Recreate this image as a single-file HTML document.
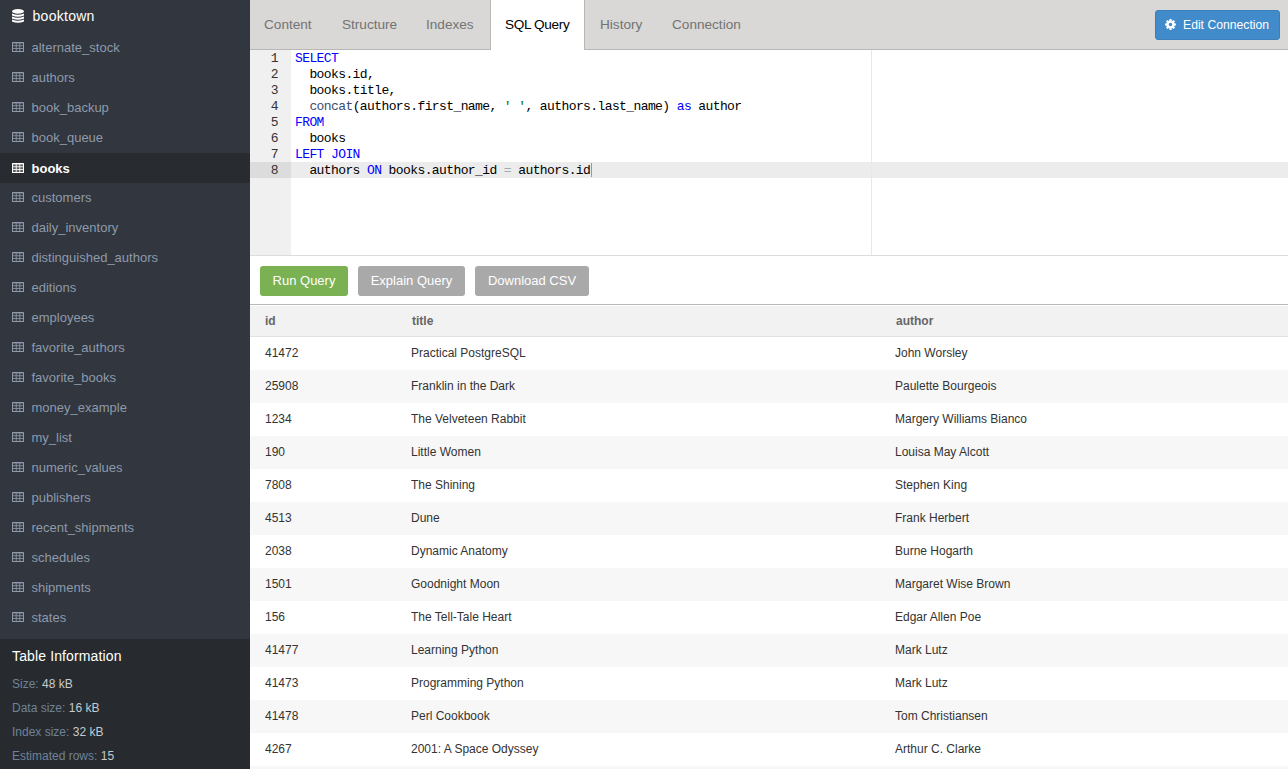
<!DOCTYPE html>
<html><head><meta charset="utf-8">
<style>
*{box-sizing:border-box;margin:0;padding:0}
html,body{width:1288px;height:769px;overflow:hidden;background:#fff;font-family:"Liberation Sans",sans-serif}
#sidebar{position:absolute;left:0;top:0;width:250px;height:769px;background:#32363e}
#dbname{position:absolute;left:0;top:0;width:250px;height:33px;color:#fff;font-size:14px}
#dbname svg{position:absolute;left:12px;top:9px}
#dbname span{position:absolute;left:32.5px;top:8px;line-height:16px;letter-spacing:0.28px}
#tables{position:absolute;left:0;top:33px;width:250px}
#tables div{position:relative;height:30px;color:#8e9aab;font-size:13px;line-height:30px;padding-left:31.5px}
#tables div svg{position:absolute;left:12px;top:9px}
#tables div.sel svg{top:10px}
#tables div.sel{background:#282c31;color:#fff;font-weight:bold;line-height:32px}
#info{position:absolute;left:0;top:639px;width:250px;height:130px;background:#272b30}
#info h4{position:absolute;left:12px;top:9px;letter-spacing:0.13px;font-weight:normal;font-size:14px;color:#fff;line-height:16px}
#info p{position:absolute;left:12px;font-size:12px;color:#6f8296;line-height:14px;white-space:nowrap}
#info p b{font-weight:normal;color:#c5cacf}
#nav{position:absolute;left:250px;top:0;width:1038px;height:50px;background:#d9d8d6;border-bottom:1px solid #b8b7b5}
.tab{position:absolute;top:0;height:49px;font-size:13.6px;color:#737373;line-height:16px;padding-top:17px;white-space:nowrap}
.tab.sel{background:#fff;color:#000;border-left:1px solid #b8b7b5;border-right:1px solid #b8b7b5;height:50px}
#editbtn{position:absolute;left:905px;top:10px;width:125px;height:30px;background:#428bca;border:1px solid #3b80bd;border-radius:3px;color:#fff;font-size:12.2px;line-height:28px}
#editbtn svg{position:absolute;left:9px;top:8px}
#editbtn span{position:absolute;left:27px;top:0}
#editor{position:absolute;left:250px;top:50px;width:1038px;height:206px;background:#fff;border-bottom:1px solid #dcdcdc;font-family:"Liberation Mono",monospace;font-size:12px}
#gutter{position:absolute;left:0;top:0;width:41px;height:205px;background:#f0f0f0}
.ln{position:absolute;left:0;width:41px;height:16px;line-height:16px;padding-top:1px;text-align:right;padding-right:13px;color:#333;font-size:13px;letter-spacing:-0.6px}
.ln.act{background:#dcdcdc}
.actline{position:absolute;left:41px;width:997px;top:112px;height:16px;background:#ececec}
.margin{position:absolute;left:621px;top:0;width:1px;height:205px;background:#e8e8e8}
.code{position:absolute;left:45px;height:16px;line-height:16px;padding-top:1px;white-space:pre;color:#000;font-size:13px;letter-spacing:-0.6px}
.kw{color:#0000ff}.fn{color:#3c4c72}.str{color:#036a07}.op{color:#a3abb3}
.caret{position:absolute;width:1px;height:14px;background:#9a9a9a}
#btns{position:absolute;left:260px;top:266px}
.btn{position:absolute;top:0;height:30px;border-radius:3px;color:#fff;font-size:13px;line-height:30px;white-space:nowrap;text-align:center}
#results{position:absolute;left:250px;top:304px;width:1038px;height:465px;border-top:1px solid #b9b9b9;overflow:hidden}
.hdr{position:absolute;left:0;top:1px;width:1038px;height:31px;background:#f2f2f2;border-bottom:1px solid #e2e2e2}
.hdr span{position:absolute;top:0;line-height:31px;font-size:12px;font-weight:bold;color:#666}
.row{position:absolute;left:0;width:1038px;height:33px;font-size:12px;color:#333}
.row.g{background:#f7f7f7}
.row span{position:absolute;top:0;line-height:33px;white-space:nowrap}
.c1{left:15px}.c2{left:161px}.c3{left:645px}
</style></head><body>
<div id="sidebar">
  <div id="dbname">
    <svg width="12" height="14" viewBox="0 0 12 14"><g fill="#fff"><ellipse cx="6" cy="2.35" rx="6" ry="2.35"/><path d="M0 4.5Q6 6.9 12 4.5V6.6Q6 9.0 0 6.6Z"/><path d="M0 7.5Q6 9.9 12 7.5V9.6Q6 12.0 0 9.6Z"/><path d="M0 10.5Q6 12.9 12 10.5V12.6Q6 15.0 0 12.6Z"/></g></svg>
    <span>booktown</span>
  </div>
  <div id="tables">
    <div><svg width="12" height="10" viewBox="0 0 12 10"><rect width="12" height="10" rx=".6" fill="currentColor"/><g fill="rgba(0,0,0,.62)"><rect x="1" y="1.4" width="2.8" height="2"/><rect x="4.6" y="1.4" width="2.8" height="2"/><rect x="8.2" y="1.4" width="2.8" height="2"/><rect x="1" y="4.2" width="2.8" height="2"/><rect x="4.6" y="4.2" width="2.8" height="2"/><rect x="8.2" y="4.2" width="2.8" height="2"/><rect x="1" y="7" width="2.8" height="2"/><rect x="4.6" y="7" width="2.8" height="2"/><rect x="8.2" y="7" width="2.8" height="2"/></g></svg>alternate_stock</div>
    <div><svg width="12" height="10" viewBox="0 0 12 10"><rect width="12" height="10" rx=".6" fill="currentColor"/><g fill="rgba(0,0,0,.62)"><rect x="1" y="1.4" width="2.8" height="2"/><rect x="4.6" y="1.4" width="2.8" height="2"/><rect x="8.2" y="1.4" width="2.8" height="2"/><rect x="1" y="4.2" width="2.8" height="2"/><rect x="4.6" y="4.2" width="2.8" height="2"/><rect x="8.2" y="4.2" width="2.8" height="2"/><rect x="1" y="7" width="2.8" height="2"/><rect x="4.6" y="7" width="2.8" height="2"/><rect x="8.2" y="7" width="2.8" height="2"/></g></svg>authors</div>
    <div><svg width="12" height="10" viewBox="0 0 12 10"><rect width="12" height="10" rx=".6" fill="currentColor"/><g fill="rgba(0,0,0,.62)"><rect x="1" y="1.4" width="2.8" height="2"/><rect x="4.6" y="1.4" width="2.8" height="2"/><rect x="8.2" y="1.4" width="2.8" height="2"/><rect x="1" y="4.2" width="2.8" height="2"/><rect x="4.6" y="4.2" width="2.8" height="2"/><rect x="8.2" y="4.2" width="2.8" height="2"/><rect x="1" y="7" width="2.8" height="2"/><rect x="4.6" y="7" width="2.8" height="2"/><rect x="8.2" y="7" width="2.8" height="2"/></g></svg>book_backup</div>
    <div><svg width="12" height="10" viewBox="0 0 12 10"><rect width="12" height="10" rx=".6" fill="currentColor"/><g fill="rgba(0,0,0,.62)"><rect x="1" y="1.4" width="2.8" height="2"/><rect x="4.6" y="1.4" width="2.8" height="2"/><rect x="8.2" y="1.4" width="2.8" height="2"/><rect x="1" y="4.2" width="2.8" height="2"/><rect x="4.6" y="4.2" width="2.8" height="2"/><rect x="8.2" y="4.2" width="2.8" height="2"/><rect x="1" y="7" width="2.8" height="2"/><rect x="4.6" y="7" width="2.8" height="2"/><rect x="8.2" y="7" width="2.8" height="2"/></g></svg>book_queue</div>
    <div class="sel"><svg width="12" height="10" viewBox="0 0 12 10"><rect width="12" height="10" rx=".6" fill="currentColor"/><g fill="rgba(0,0,0,.62)"><rect x="1" y="1.4" width="2.8" height="2"/><rect x="4.6" y="1.4" width="2.8" height="2"/><rect x="8.2" y="1.4" width="2.8" height="2"/><rect x="1" y="4.2" width="2.8" height="2"/><rect x="4.6" y="4.2" width="2.8" height="2"/><rect x="8.2" y="4.2" width="2.8" height="2"/><rect x="1" y="7" width="2.8" height="2"/><rect x="4.6" y="7" width="2.8" height="2"/><rect x="8.2" y="7" width="2.8" height="2"/></g></svg>books</div>
    <div><svg width="12" height="10" viewBox="0 0 12 10"><rect width="12" height="10" rx=".6" fill="currentColor"/><g fill="rgba(0,0,0,.62)"><rect x="1" y="1.4" width="2.8" height="2"/><rect x="4.6" y="1.4" width="2.8" height="2"/><rect x="8.2" y="1.4" width="2.8" height="2"/><rect x="1" y="4.2" width="2.8" height="2"/><rect x="4.6" y="4.2" width="2.8" height="2"/><rect x="8.2" y="4.2" width="2.8" height="2"/><rect x="1" y="7" width="2.8" height="2"/><rect x="4.6" y="7" width="2.8" height="2"/><rect x="8.2" y="7" width="2.8" height="2"/></g></svg>customers</div>
    <div><svg width="12" height="10" viewBox="0 0 12 10"><rect width="12" height="10" rx=".6" fill="currentColor"/><g fill="rgba(0,0,0,.62)"><rect x="1" y="1.4" width="2.8" height="2"/><rect x="4.6" y="1.4" width="2.8" height="2"/><rect x="8.2" y="1.4" width="2.8" height="2"/><rect x="1" y="4.2" width="2.8" height="2"/><rect x="4.6" y="4.2" width="2.8" height="2"/><rect x="8.2" y="4.2" width="2.8" height="2"/><rect x="1" y="7" width="2.8" height="2"/><rect x="4.6" y="7" width="2.8" height="2"/><rect x="8.2" y="7" width="2.8" height="2"/></g></svg>daily_inventory</div>
    <div><svg width="12" height="10" viewBox="0 0 12 10"><rect width="12" height="10" rx=".6" fill="currentColor"/><g fill="rgba(0,0,0,.62)"><rect x="1" y="1.4" width="2.8" height="2"/><rect x="4.6" y="1.4" width="2.8" height="2"/><rect x="8.2" y="1.4" width="2.8" height="2"/><rect x="1" y="4.2" width="2.8" height="2"/><rect x="4.6" y="4.2" width="2.8" height="2"/><rect x="8.2" y="4.2" width="2.8" height="2"/><rect x="1" y="7" width="2.8" height="2"/><rect x="4.6" y="7" width="2.8" height="2"/><rect x="8.2" y="7" width="2.8" height="2"/></g></svg>distinguished_authors</div>
    <div><svg width="12" height="10" viewBox="0 0 12 10"><rect width="12" height="10" rx=".6" fill="currentColor"/><g fill="rgba(0,0,0,.62)"><rect x="1" y="1.4" width="2.8" height="2"/><rect x="4.6" y="1.4" width="2.8" height="2"/><rect x="8.2" y="1.4" width="2.8" height="2"/><rect x="1" y="4.2" width="2.8" height="2"/><rect x="4.6" y="4.2" width="2.8" height="2"/><rect x="8.2" y="4.2" width="2.8" height="2"/><rect x="1" y="7" width="2.8" height="2"/><rect x="4.6" y="7" width="2.8" height="2"/><rect x="8.2" y="7" width="2.8" height="2"/></g></svg>editions</div>
    <div><svg width="12" height="10" viewBox="0 0 12 10"><rect width="12" height="10" rx=".6" fill="currentColor"/><g fill="rgba(0,0,0,.62)"><rect x="1" y="1.4" width="2.8" height="2"/><rect x="4.6" y="1.4" width="2.8" height="2"/><rect x="8.2" y="1.4" width="2.8" height="2"/><rect x="1" y="4.2" width="2.8" height="2"/><rect x="4.6" y="4.2" width="2.8" height="2"/><rect x="8.2" y="4.2" width="2.8" height="2"/><rect x="1" y="7" width="2.8" height="2"/><rect x="4.6" y="7" width="2.8" height="2"/><rect x="8.2" y="7" width="2.8" height="2"/></g></svg>employees</div>
    <div><svg width="12" height="10" viewBox="0 0 12 10"><rect width="12" height="10" rx=".6" fill="currentColor"/><g fill="rgba(0,0,0,.62)"><rect x="1" y="1.4" width="2.8" height="2"/><rect x="4.6" y="1.4" width="2.8" height="2"/><rect x="8.2" y="1.4" width="2.8" height="2"/><rect x="1" y="4.2" width="2.8" height="2"/><rect x="4.6" y="4.2" width="2.8" height="2"/><rect x="8.2" y="4.2" width="2.8" height="2"/><rect x="1" y="7" width="2.8" height="2"/><rect x="4.6" y="7" width="2.8" height="2"/><rect x="8.2" y="7" width="2.8" height="2"/></g></svg>favorite_authors</div>
    <div><svg width="12" height="10" viewBox="0 0 12 10"><rect width="12" height="10" rx=".6" fill="currentColor"/><g fill="rgba(0,0,0,.62)"><rect x="1" y="1.4" width="2.8" height="2"/><rect x="4.6" y="1.4" width="2.8" height="2"/><rect x="8.2" y="1.4" width="2.8" height="2"/><rect x="1" y="4.2" width="2.8" height="2"/><rect x="4.6" y="4.2" width="2.8" height="2"/><rect x="8.2" y="4.2" width="2.8" height="2"/><rect x="1" y="7" width="2.8" height="2"/><rect x="4.6" y="7" width="2.8" height="2"/><rect x="8.2" y="7" width="2.8" height="2"/></g></svg>favorite_books</div>
    <div><svg width="12" height="10" viewBox="0 0 12 10"><rect width="12" height="10" rx=".6" fill="currentColor"/><g fill="rgba(0,0,0,.62)"><rect x="1" y="1.4" width="2.8" height="2"/><rect x="4.6" y="1.4" width="2.8" height="2"/><rect x="8.2" y="1.4" width="2.8" height="2"/><rect x="1" y="4.2" width="2.8" height="2"/><rect x="4.6" y="4.2" width="2.8" height="2"/><rect x="8.2" y="4.2" width="2.8" height="2"/><rect x="1" y="7" width="2.8" height="2"/><rect x="4.6" y="7" width="2.8" height="2"/><rect x="8.2" y="7" width="2.8" height="2"/></g></svg>money_example</div>
    <div><svg width="12" height="10" viewBox="0 0 12 10"><rect width="12" height="10" rx=".6" fill="currentColor"/><g fill="rgba(0,0,0,.62)"><rect x="1" y="1.4" width="2.8" height="2"/><rect x="4.6" y="1.4" width="2.8" height="2"/><rect x="8.2" y="1.4" width="2.8" height="2"/><rect x="1" y="4.2" width="2.8" height="2"/><rect x="4.6" y="4.2" width="2.8" height="2"/><rect x="8.2" y="4.2" width="2.8" height="2"/><rect x="1" y="7" width="2.8" height="2"/><rect x="4.6" y="7" width="2.8" height="2"/><rect x="8.2" y="7" width="2.8" height="2"/></g></svg>my_list</div>
    <div><svg width="12" height="10" viewBox="0 0 12 10"><rect width="12" height="10" rx=".6" fill="currentColor"/><g fill="rgba(0,0,0,.62)"><rect x="1" y="1.4" width="2.8" height="2"/><rect x="4.6" y="1.4" width="2.8" height="2"/><rect x="8.2" y="1.4" width="2.8" height="2"/><rect x="1" y="4.2" width="2.8" height="2"/><rect x="4.6" y="4.2" width="2.8" height="2"/><rect x="8.2" y="4.2" width="2.8" height="2"/><rect x="1" y="7" width="2.8" height="2"/><rect x="4.6" y="7" width="2.8" height="2"/><rect x="8.2" y="7" width="2.8" height="2"/></g></svg>numeric_values</div>
    <div><svg width="12" height="10" viewBox="0 0 12 10"><rect width="12" height="10" rx=".6" fill="currentColor"/><g fill="rgba(0,0,0,.62)"><rect x="1" y="1.4" width="2.8" height="2"/><rect x="4.6" y="1.4" width="2.8" height="2"/><rect x="8.2" y="1.4" width="2.8" height="2"/><rect x="1" y="4.2" width="2.8" height="2"/><rect x="4.6" y="4.2" width="2.8" height="2"/><rect x="8.2" y="4.2" width="2.8" height="2"/><rect x="1" y="7" width="2.8" height="2"/><rect x="4.6" y="7" width="2.8" height="2"/><rect x="8.2" y="7" width="2.8" height="2"/></g></svg>publishers</div>
    <div><svg width="12" height="10" viewBox="0 0 12 10"><rect width="12" height="10" rx=".6" fill="currentColor"/><g fill="rgba(0,0,0,.62)"><rect x="1" y="1.4" width="2.8" height="2"/><rect x="4.6" y="1.4" width="2.8" height="2"/><rect x="8.2" y="1.4" width="2.8" height="2"/><rect x="1" y="4.2" width="2.8" height="2"/><rect x="4.6" y="4.2" width="2.8" height="2"/><rect x="8.2" y="4.2" width="2.8" height="2"/><rect x="1" y="7" width="2.8" height="2"/><rect x="4.6" y="7" width="2.8" height="2"/><rect x="8.2" y="7" width="2.8" height="2"/></g></svg>recent_shipments</div>
    <div><svg width="12" height="10" viewBox="0 0 12 10"><rect width="12" height="10" rx=".6" fill="currentColor"/><g fill="rgba(0,0,0,.62)"><rect x="1" y="1.4" width="2.8" height="2"/><rect x="4.6" y="1.4" width="2.8" height="2"/><rect x="8.2" y="1.4" width="2.8" height="2"/><rect x="1" y="4.2" width="2.8" height="2"/><rect x="4.6" y="4.2" width="2.8" height="2"/><rect x="8.2" y="4.2" width="2.8" height="2"/><rect x="1" y="7" width="2.8" height="2"/><rect x="4.6" y="7" width="2.8" height="2"/><rect x="8.2" y="7" width="2.8" height="2"/></g></svg>schedules</div>
    <div><svg width="12" height="10" viewBox="0 0 12 10"><rect width="12" height="10" rx=".6" fill="currentColor"/><g fill="rgba(0,0,0,.62)"><rect x="1" y="1.4" width="2.8" height="2"/><rect x="4.6" y="1.4" width="2.8" height="2"/><rect x="8.2" y="1.4" width="2.8" height="2"/><rect x="1" y="4.2" width="2.8" height="2"/><rect x="4.6" y="4.2" width="2.8" height="2"/><rect x="8.2" y="4.2" width="2.8" height="2"/><rect x="1" y="7" width="2.8" height="2"/><rect x="4.6" y="7" width="2.8" height="2"/><rect x="8.2" y="7" width="2.8" height="2"/></g></svg>shipments</div>
    <div><svg width="12" height="10" viewBox="0 0 12 10"><rect width="12" height="10" rx=".6" fill="currentColor"/><g fill="rgba(0,0,0,.62)"><rect x="1" y="1.4" width="2.8" height="2"/><rect x="4.6" y="1.4" width="2.8" height="2"/><rect x="8.2" y="1.4" width="2.8" height="2"/><rect x="1" y="4.2" width="2.8" height="2"/><rect x="4.6" y="4.2" width="2.8" height="2"/><rect x="8.2" y="4.2" width="2.8" height="2"/><rect x="1" y="7" width="2.8" height="2"/><rect x="4.6" y="7" width="2.8" height="2"/><rect x="8.2" y="7" width="2.8" height="2"/></g></svg>states</div>
  </div>
  <div id="info">
    <h4>Table Information</h4>
    <p style="top:38px">Size: <b>48 kB</b></p>
    <p style="top:62px">Data size: <b>16 kB</b></p>
    <p style="top:86px">Index size: <b>32 kB</b></p>
    <p style="top:110px">Estimated rows: <b>15</b></p>
  </div>
</div>
<div id="nav">
  <div class="tab" style="left:14px">Content</div>
  <div class="tab" style="left:92px">Structure</div>
  <div class="tab" style="left:176px">Indexes</div>
  <div class="tab sel" style="left:240px;width:95px;padding-left:14px;letter-spacing:-0.35px">SQL Query</div>
  <div class="tab" style="left:350px">History</div>
  <div class="tab" style="left:422px">Connection</div>
  <div id="editbtn">
    <svg width="11" height="11" viewBox="0 0 12 12"><path fill="#fff" fill-rule="evenodd" d="M4.74 1.89 L4.86 0.11 L7.14 0.11 L7.26 1.89 L7.74 1.80 L8.02 2.20 L9.36 1.03 L10.97 2.64 L9.80 3.98 L10.20 4.26 L10.11 4.74 L11.89 4.86 L11.89 7.14 L10.11 7.26 L10.20 7.74 L9.80 8.02 L10.97 9.36 L9.36 10.97 L8.02 9.80 L7.74 10.20 L7.26 10.11 L7.14 11.89 L4.86 11.89 L4.74 10.11 L4.26 10.20 L3.98 9.80 L2.64 10.97 L1.03 9.36 L2.20 8.02 L1.80 7.74 L1.89 7.26 L0.11 7.14 L0.11 4.86 L1.89 4.74 L1.80 4.26 L2.20 3.98 L1.03 2.64 L2.64 1.03 L3.98 2.20 L4.26 1.80Z M6 4.1A1.9 1.9 0 1 0 6 7.9A1.9 1.9 0 1 0 6 4.1Z"/></svg>
    <span>Edit Connection</span>
  </div>
</div>
<div id="editor">
  <div id="gutter"></div>
  <div class="actline"></div>
  <div class="margin"></div>
  <div class="ln" style="top:0">1</div>
  <div class="ln" style="top:16px">2</div>
  <div class="ln" style="top:32px">3</div>
  <div class="ln" style="top:48px">4</div>
  <div class="ln" style="top:64px">5</div>
  <div class="ln" style="top:80px">6</div>
  <div class="ln" style="top:96px">7</div>
  <div class="ln act" style="top:112px">8</div>
  <div class="code" style="top:0"><span class="kw">SELECT</span></div>
  <div class="code" style="top:16px">  books.id,</div>
  <div class="code" style="top:32px">  books.title,</div>
  <div class="code" style="top:48px">  <span class="fn">concat</span>(authors.first_name, <span class="str">' '</span>, authors.last_name) <span class="kw">as</span> author</div>
  <div class="code" style="top:64px"><span class="kw">FROM</span></div>
  <div class="code" style="top:80px">  books</div>
  <div class="code" style="top:96px"><span class="kw">LEFT JOIN</span></div>
  <div class="code" style="top:112px">  authors <span class="kw">ON</span> books.author_id <span class="op">=</span> authors.id</div>
  <div class="caret" style="left:341px;top:113px"></div>
</div>
<div id="btns">
  <div class="btn" style="left:0;width:88px;background:#79b153">Run Query</div>
  <div class="btn" style="left:98px;width:107px;background:#a9a9a9">Explain Query</div>
  <div class="btn" style="left:215px;width:114px;background:#a9a9a9">Download CSV</div>
</div>
<div id="results">
  <div class="hdr"><span class="c1">id</span><span class="c2" style="left:162px">title</span><span class="c3" style="left:646px">author</span></div>
  <div class="row" style="top:32px"><span class="c1">41472</span><span class="c2">Practical PostgreSQL</span><span class="c3">John Worsley</span></div>
  <div class="row g" style="top:65px"><span class="c1">25908</span><span class="c2">Franklin in the Dark</span><span class="c3">Paulette Bourgeois</span></div>
  <div class="row" style="top:98px"><span class="c1">1234</span><span class="c2">The Velveteen Rabbit</span><span class="c3">Margery Williams Bianco</span></div>
  <div class="row g" style="top:131px"><span class="c1">190</span><span class="c2">Little Women</span><span class="c3">Louisa May Alcott</span></div>
  <div class="row" style="top:164px"><span class="c1">7808</span><span class="c2">The Shining</span><span class="c3">Stephen King</span></div>
  <div class="row g" style="top:197px"><span class="c1">4513</span><span class="c2">Dune</span><span class="c3">Frank Herbert</span></div>
  <div class="row" style="top:230px"><span class="c1">2038</span><span class="c2">Dynamic Anatomy</span><span class="c3">Burne Hogarth</span></div>
  <div class="row g" style="top:263px"><span class="c1">1501</span><span class="c2">Goodnight Moon</span><span class="c3">Margaret Wise Brown</span></div>
  <div class="row" style="top:296px"><span class="c1">156</span><span class="c2">The Tell-Tale Heart</span><span class="c3">Edgar Allen Poe</span></div>
  <div class="row g" style="top:329px"><span class="c1">41477</span><span class="c2">Learning Python</span><span class="c3">Mark Lutz</span></div>
  <div class="row" style="top:362px"><span class="c1">41473</span><span class="c2">Programming Python</span><span class="c3">Mark Lutz</span></div>
  <div class="row g" style="top:395px"><span class="c1">41478</span><span class="c2">Perl Cookbook</span><span class="c3">Tom Christiansen</span></div>
  <div class="row" style="top:428px"><span class="c1">4267</span><span class="c2">2001: A Space Odyssey</span><span class="c3">Arthur C. Clarke</span></div>
  <div class="row g" style="top:461px"><span class="c1"></span><span class="c2"></span><span class="c3"></span></div>
</div>
</body></html>
